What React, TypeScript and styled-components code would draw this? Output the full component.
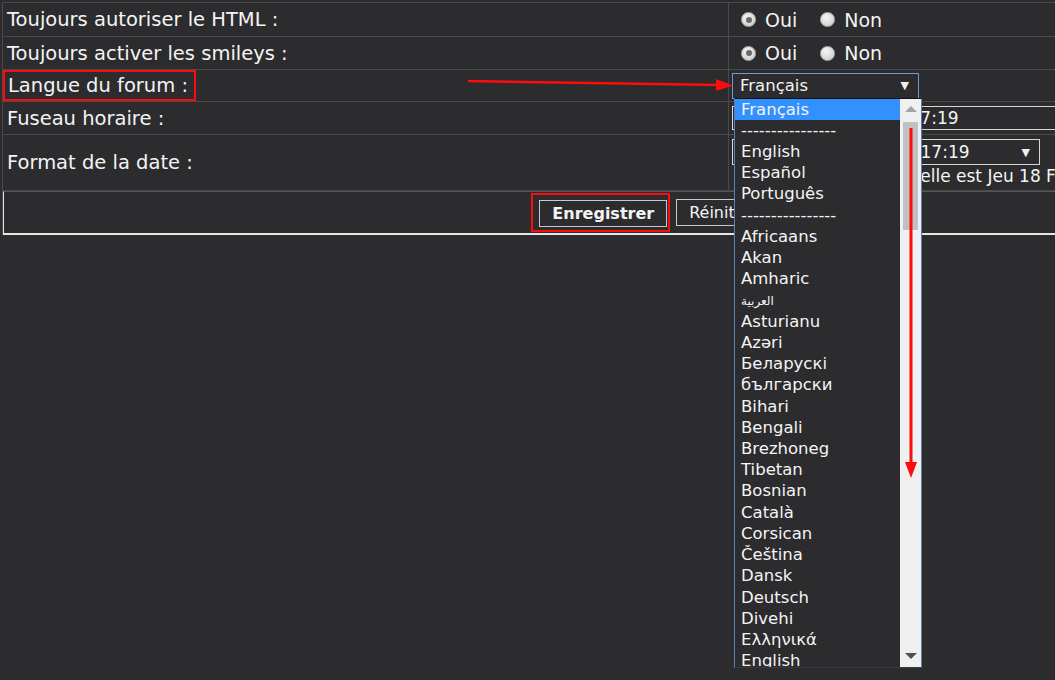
import React from "react";
import styled, { createGlobalStyle } from "styled-components";

const GlobalStyle = createGlobalStyle`
  html, body {
    margin: 0;
    padding: 0;
    background: #2c2b2e;
    overflow: hidden;
  }
  body {
    font-family: "DejaVu Sans", Verdana, sans-serif;
    font-size: 19px;
    color: #f4f4f4;
  }
`;

const Page = styled.div`
  position: relative;
  width: 1055px;
  height: 680px;
  overflow: hidden;
  padding: 2px 0 0 2px;
  box-sizing: border-box;
`;

const Form = styled.div`
  width: 1320px;
  border-top: 1px solid #4b494b;
  border-left: 1px solid #4b494b;
`;

const Row = styled.div<{ $h: number }>`
  display: grid;
  grid-template-columns: 726px 1fr;
  height: ${(p) => p.$h}px;
  border-bottom: 1px solid #4b494b;
`;

const Label = styled.div`
  display: flex;
  align-items: center;
  padding-left: 4px;
  border-right: 1px solid #4b494b;
  white-space: nowrap;
  font-size: 19.5px;
`;

const Marked = styled.span`
  align-self: stretch;
  display: flex;
  align-items: center;
  margin-left: -4px;
  padding: 0 6px 0 3px;
  border: 2px solid #ff0b0b;
`;

const Field = styled.div`
  position: relative;
  display: flex;
  align-items: center;
  padding-left: 12px;
  white-space: nowrap;
`;

const FieldStack = styled(Field)`
  flex-direction: column;
  align-items: flex-start;
  justify-content: center;
  padding-left: 3px;
  gap: 1px;
  font-size: 17px;
`;

const RadioGroup = styled.label`
  display: flex;
  align-items: center;
  margin-right: 23px;
`;

const Radio = styled.span<{ $checked?: boolean }>`
  width: 15px;
  height: 15px;
  border-radius: 50%;
  margin-right: 9px;
  box-sizing: border-box;
  background: radial-gradient(circle at 40% 35%, #f6f6f6, #c6c6c6);
  border: 1px solid #b0b0b0;
  display: flex;
  align-items: center;
  justify-content: center;
  &::after {
    content: "";
    width: 6px;
    height: 6px;
    border-radius: 50%;
    background: ${(p) => (p.$checked ? "#6a6a6a" : "transparent")};
  }
`;

const SelectWrap = styled.div`
  position: relative;
  margin-left: -9px;
`;

const SelectBox = styled.div<{ $focus?: boolean; $w: number; $pad?: number }>`
  width: ${(p) => p.$w}px;
  height: 26px;
  box-sizing: border-box;
  display: flex;
  align-items: center;
  justify-content: space-between;
  padding: 0 9px 0 ${(p) => p.$pad ?? 7}px;
  border: 1px solid ${(p) => (p.$focus ? "#6d9be0" : "#d8d8d8")};
  background: #2c2b2e;
  font-size: ${(p) => (p.$focus ? "16.5px" : "17px")};
`;

const Caret = styled.span`
  font-size: 11px;
  color: #f0f0f0;
`;

const TextBox = styled.div`
  width: 420px;
  height: 24px;
  box-sizing: border-box;
  display: flex;
  align-items: center;
  padding-left: 29px;
  border: 1px solid #d8d8d8;
  border-right: none;
`;

const Note = styled.span`
  padding-left: 28px;
`;

const Dropdown = styled.div`
  position: absolute;
  left: 2px;
  top: 25px;
  width: 188px;
  height: 570px;
  box-sizing: border-box;
  background: #2c2b2e;
  border: 1px solid #5c7eb3;
  border-top-color: #111;
  border-bottom-color: #3a3a3a;
  display: flex;
  overflow: hidden;
  z-index: 5;
`;

const Options = styled.ul`
  flex: 1;
  margin: 0;
  padding: 0;
  list-style: none;
  font-size: 16.5px;
`;

const Option = styled.li<{ $active?: boolean }>`
  height: 21.23px;
  line-height: 22px;
  padding-left: 6px;
  white-space: nowrap;
  background: ${(p) => (p.$active ? "#3391ff" : "transparent")};
  color: #f4f4f4;
`;

const Arabic = styled.span`
  font-size: 12px;
`;

const Scrollbar = styled.div`
  position: relative;
  width: 21px;
  background: #f0f0f0;
  display: flex;
  flex-direction: column;
  align-items: center;
`;

const ScrollArrow = styled.div<{ $down?: boolean }>`
  height: 21px;
  display: flex;
  align-items: center;
  justify-content: center;
  &::after {
    content: "";
    border-left: 6px solid transparent;
    border-right: 6px solid transparent;
    ${(p) =>
      p.$down
        ? "border-top: 6px solid #505050;"
        : "border-bottom: 6px solid #a3a3a3;"}
  }
`;

const Thumb = styled.div`
  width: 15px;
  height: 108px;
  margin-top: 2px;
  background: #c1c1c1;
`;

const Spacer = styled.div`
  flex: 1;
`;

const ButtonRow = styled.div`
  height: 44px;
  display: flex;
  align-items: center;
  justify-content: center;
  gap: 6px;
  border-left: 1px solid #e6e6e6;
  border-bottom: 2px solid #e6e6e6;
  border-top: 1px solid #555;
  box-sizing: border-box;
`;

const ButtonMark = styled.div`
  padding: 5px 1px 3px 6px;
  border: 2px solid #ff0b0b;
`;

const Button = styled.button<{ $bold?: boolean }>`
  height: 27px;
  padding: 0 12px;
  background: #2c2b2e;
  color: #f4f4f4;
  border: 1px solid #c8c8c8;
  font-family: "DejaVu Sans", Verdana, sans-serif;
  font-size: 16px;
  font-weight: ${(p) => (p.$bold ? 700 : 400)};
`;

const Annotation = styled.svg`
  position: absolute;
  pointer-events: none;
  z-index: 10;
`;

const languages = [
  "English",
  "Español",
  "Português",
  "----------------",
  "Africaans",
  "Akan",
  "Amharic",
  "__ar",
  "Asturianu",
  "Azəri",
  "Беларускі",
  "български",
  "Bihari",
  "Bengali",
  "Brezhoneg",
  "Tibetan",
  "Bosnian",
  "Català",
  "Corsican",
  "Čeština",
  "Dansk",
  "Deutsch",
  "Divehi",
  "Ελληνικά",
  "English",
];

function YesNo() {
  return (
    <Field>
      <RadioGroup>
        <Radio $checked />
        Oui
      </RadioGroup>
      <RadioGroup>
        <Radio />
        Non
      </RadioGroup>
    </Field>
  );
}

export default function App() {
  return (
    <Page>
      <GlobalStyle />
      <Form>
        <Row $h={33}>
          <Label>Toujours autoriser le HTML :</Label>
          <YesNo />
        </Row>
        <Row $h={32}>
          <Label>Toujours activer les smileys :</Label>
          <YesNo />
        </Row>
        <Row $h={31}>
          <Label>
            <Marked>Langue du forum :</Marked>
          </Label>
          <Field>
            <SelectWrap>
              <SelectBox $focus $w={187}>
                Français
                <Caret>▼</Caret>
              </SelectBox>
              <Dropdown>
                <Options>
                  <Option $active>Français</Option>
                  <Option>----------------</Option>
                  {languages.map((l, i) => (
                    <Option key={i}>
                      {l === "__ar" ? <Arabic>العربية</Arabic> : l}
                    </Option>
                  ))}
                </Options>
                <Scrollbar>
                  <ScrollArrow />
                  <Thumb />
                  <Spacer />
                  <ScrollArrow $down />
                </Scrollbar>
                <Annotation
                  width="14"
                  height="352"
                  style={{ left: 169, top: 29 }}
                  viewBox="0 0 14 352"
                >
                  <line x1="7" y1="0" x2="7" y2="338" stroke="#ff0b0b" strokeWidth="3" />
                  <polygon points="1,334 13,334 7,350" fill="#ff0b0b" />
                </Annotation>
              </Dropdown>
            </SelectWrap>
          </Field>
        </Row>
        <Row $h={32}>
          <Label>Fuseau horaire :</Label>
          <FieldStack>
            <TextBox>Jeu 18 Fév 2016, 17:19</TextBox>
          </FieldStack>
        </Row>
        <Row $h={55}>
          <Label>Format de la date :</Label>
          <FieldStack>
            <SelectBox $w={308} $pad={40}>
              Jeu 18 Fév 2016, 17:19
              <Caret>▼</Caret>
            </SelectBox>
            <Note>Date et heure actuelle est Jeu 18 Fév 2016, 17:19</Note>
          </FieldStack>
        </Row>
        <ButtonRow>
          <ButtonMark>
            <Button $bold>Enregistrer</Button>
          </ButtonMark>
          <Button>Réinitialiser</Button>
        </ButtonRow>
      </Form>
      <Annotation
        width="270"
        height="16"
        style={{ left: 466, top: 76 }}
        viewBox="0 0 270 16"
      >
        <line x1="2" y1="5" x2="254" y2="9" stroke="#ff0b0b" strokeWidth="2.5" />
        <polygon points="250,3 267,9.5 250,15" fill="#ff0b0b" />
      </Annotation>
    </Page>
  );
}
